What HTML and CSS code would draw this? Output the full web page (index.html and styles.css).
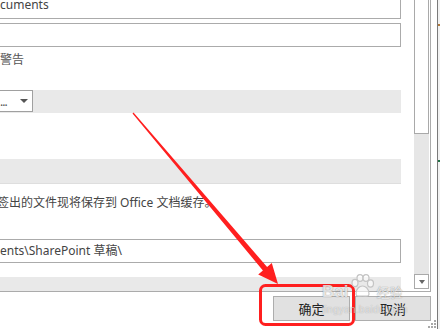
FILE: index.html
```html
<!DOCTYPE html>
<html lang="zh-CN">
<head>
    <meta charset="UTF-8">
    <meta name="viewport" content="width=device-width, initial-scale=1.0">
    <title>Word 选项 - 保存</title>
    <link rel="stylesheet" href="styles.css">
</head>
<body>
    <div class="screen">
        <div class="dialog">
            <div class="frame">
                <div class="panel">
                    <div class="field field-top">cuments</div>
                    <div class="field"></div>
                    <div class="label">警告</div>
                    <div class="band band-select">
                        <div class="select">
                            <span class="dots">...</span>
                            <span class="caret"></span>
                        </div>
                    </div>
                    <div class="band band-mid"></div>
                    <div class="note">签出的文件现将保存到 Office 文档缓存。</div>
                    <div class="field field-path">ents\SharePoint 草稿\</div>
                    <div class="band band-bottom"></div>
                </div>
                <div class="scrollbar">
                    <div class="thumb"></div>
                    <div class="track"></div>
                    <div class="arrow-down"><span class="caret small"></span></div>
                </div>
            </div>
            <div class="footer">
                <button class="btn btn-ok">确定</button>
                <button class="btn btn-cancel">取消</button>
            </div>
        </div>
        <div class="excel">
            <span class="cell-mark mark-1"></span>
            <span class="cell-mark mark-2"></span>
        </div>
    </div>

    <!-- annotation layer from the screenshot -->
    <svg class="annotation" width="440" height="329" viewBox="0 0 440 329">
        <polygon fill="#ff1f1f" points="133.5,112.5 267.1,267 271.8,263 278,284 258.2,274.6 262.9,270.6 132.5,113.5"/>
        <rect x="260.5" y="285.5" width="93" height="39" rx="5" fill="none" stroke="#ff1f1f" stroke-width="3"/>
    </svg>

    <div class="watermark">
        <div class="wm-top">
            <span class="wm-bai">Bai</span>
            <svg class="wm-paw" width="26" height="24" viewBox="0 0 26 24">
                <g fill="rgba(255,255,255,0.6)" stroke="#c4c4c4" stroke-width="1.2">
                    <ellipse cx="6" cy="9" rx="3" ry="3.6"/>
                    <ellipse cx="11" cy="4" rx="3" ry="3.4"/>
                    <ellipse cx="17" cy="4" rx="3" ry="3.4"/>
                    <ellipse cx="21.5" cy="9.5" rx="3" ry="3.6"/>
                    <path d="M7 20 C7 14 11 12 13.5 12 C16 12 20 14 20 20 C20 23 16 22 13.5 22 C11 22 7 23 7 20 Z"/>
                </g>
            </svg>
            <span class="wm-jy">经验</span>
        </div>
        <div class="wm-url">jingyan.baidu.com</div>
    </div>

    <svg class="grip" width="10" height="10" viewBox="0 0 10 10">
        <g fill="#a8a8a8">
            <rect x="7" y="1" width="2" height="2"/>
            <rect x="4" y="4" width="2" height="2"/>
            <rect x="7" y="4" width="2" height="2"/>
            <rect x="1" y="7" width="2" height="2"/>
            <rect x="4" y="7" width="2" height="2"/>
            <rect x="7" y="7" width="2" height="2"/>
        </g>
    </svg>
</body>
</html>
```

FILE: styles.css
```css
body {
    margin: 0;
    width: 440px;
    height: 329px;
    overflow: hidden;
    position: relative;
    font-family: "Noto Sans", "Noto Sans CJK SC", sans-serif;
    font-size: 12px;
    color: #444;
    background: #fff;
}
.screen {
    display: flex;
    height: 329px;
}
.dialog {
    width: 437px;
    border-right: 1px solid #7a7a7a;
    background: #fff;
    display: flex;
    flex-direction: column;
}
.excel {
    flex: 1;
    background: #f2f2f2;
    position: relative;
}
.cell-mark {
    position: absolute;
    left: 0;
    width: 2px;
    height: 2px;
    background: #217346;
}
.mark-1 { top: 160px; }
.mark-2 { top: 24px; background: #b07a3c; }

.frame {
    display: flex;
    height: 291px;
    margin-right: 6px;
    border-right: 1px solid #ababab;
    border-bottom: 1px solid #ababab;
}
.panel {
    width: 401px;
    display: flex;
    flex-direction: column;
    overflow: hidden;
}
.field {
    box-sizing: border-box;
    height: 24px;
    border: 1px solid #ababab;
    border-left: none;
    line-height: 22px;
    padding-left: 0;
    white-space: nowrap;
    color: #444;
}
.field-top {
    margin-top: -5px;
    margin-bottom: 4px;
    line-height: 18px;
}
.label {
    margin-top: 5px;
    margin-bottom: 22px;
    line-height: 16px;
    color: #555;
}
.band {
    background: #e9e9e9;
}
.band-select {
    height: 23px;
}
.select {
    box-sizing: border-box;
    width: 33px;
    height: 22px;
    background: #fff;
    border: 1px solid #a0a0a0;
    border-left: none;
    display: flex;
    align-items: center;
    justify-content: space-between;
    padding-right: 4px;
}
.dots {
    line-height: 14px;
    margin-top: 2px;
    color: #555;
    letter-spacing: -1px;
}
.caret {
    width: 0;
    height: 0;
    border-left: 4px solid transparent;
    border-right: 4px solid transparent;
    border-top: 4px solid #555;
}
.band-mid {
    height: 25px;
    margin-top: 46px;
    border-bottom: 1px solid #dedede;
    box-sizing: border-box;
}
.note {
    margin-top: 11px;
    line-height: 16px;
    white-space: nowrap;
    text-indent: -3px;
}
.field-path {
    margin-top: 28px;
}
.band-bottom {
    height: 14px;
    margin-top: 14px;
}

.scrollbar {
    width: 15px;
    margin-left: 13px;
    margin-right: 1px;
    display: flex;
    flex-direction: column;
}
.thumb {
    box-sizing: border-box;
    height: 134px;
    background: #fff;
    border: 1px solid #a9a9a9;
    border-top: none;
}
.track {
    height: 140px;
    background: #e6e6e6;
}
.arrow-down {
    box-sizing: border-box;
    height: 15px;
    background: #fff;
    border: 1px solid #a9a9a9;
    display: flex;
    align-items: center;
    justify-content: center;
}
.caret.small {
    border-left-width: 3.5px;
    border-right-width: 3.5px;
    border-top-width: 4px;
    border-top-color: #666;
}

.footer {
    display: flex;
    justify-content: flex-end;
    gap: 5px;
    padding: 4px 6px 0 0;
}
.btn {
    box-sizing: border-box;
    height: 25px;
    width: 77px;
    margin: 0;
    padding: 0;
    background: #e1e1e1;
    border: 1px solid #adadad;
    border-radius: 0;
    font-family: "Noto Sans CJK SC", sans-serif;
    font-size: 13px;
    color: #222;
}
.btn-cancel {
    width: 76px;
}

.annotation {
    position: absolute;
    top: 0;
    left: 0;
    pointer-events: none;
}
.watermark {
    position: absolute;
    left: 322px;
    top: 274px;
    pointer-events: none;
    color: rgba(255, 255, 255, 0.8);
    text-shadow: 0 0 1px rgba(0, 0, 0, 0.5);
}
.wm-top {
    display: flex;
    align-items: flex-end;
    height: 27px;
}
.wm-bai {
    font-family: "Liberation Sans", sans-serif;
    font-weight: bold;
    font-size: 17px;
    line-height: 18px;
}
.wm-paw {
    margin: 0 1px 3px 1px;
}
.wm-jy {
    font-family: "Noto Sans CJK SC", sans-serif;
    font-size: 13px;
    line-height: 16px;
    margin-bottom: 1px;
}
.wm-url {
    font-family: "Liberation Sans", sans-serif;
    font-size: 10px;
    margin-top: 3px;
    letter-spacing: 0.3px;
    color: rgba(255, 255, 255, 0.6);
    text-shadow: 0 0 1px rgba(0, 0, 0, 0.3);
}
.grip {
    position: absolute;
    left: 427px;
    top: 319px;
}
```
